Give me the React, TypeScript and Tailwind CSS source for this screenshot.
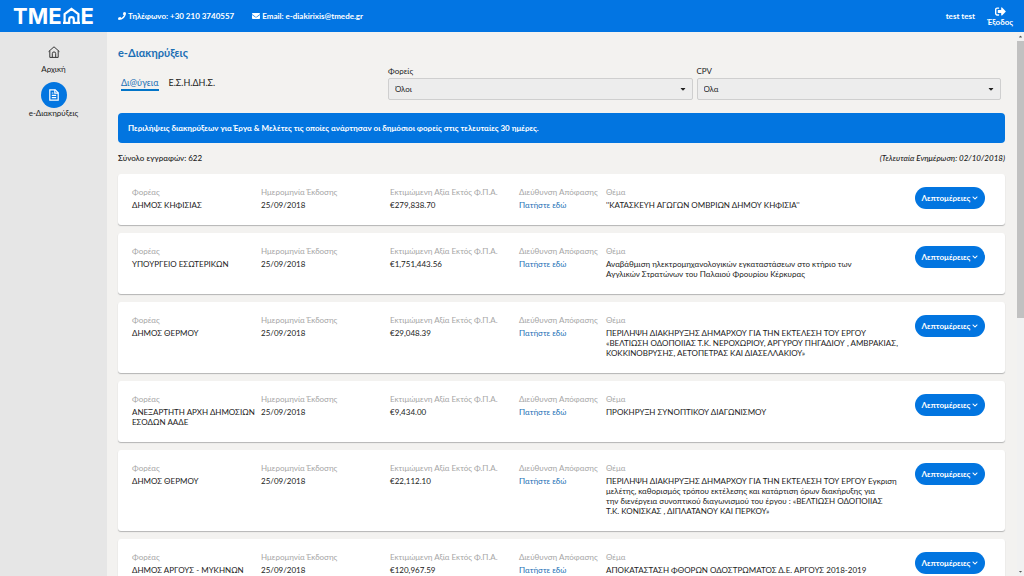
import type { ReactNode } from "react";
import {
  FaCaretDown,
  FaCaretUp,
  FaChevronDown,
  FaEnvelope,
  FaPhone,
  FaSignOutAlt,
} from "react-icons/fa";

type Notice = {
  org: string;
  date: string;
  value: string;
  subject: string;
};

const NOTICES: Notice[] = [
  {
    org: "ΔΗΜΟΣ ΚΗΦΙΣΙΑΣ",
    date: "25/09/2018",
    value: "€279,838.70",
    subject: "''ΚΑΤΑΣΚΕΥΗ ΑΓΩΓΩΝ ΟΜΒΡΙΩΝ ΔΗΜΟΥ ΚΗΦΙΣΙΑ''",
  },
  {
    org: "ΥΠΟΥΡΓΕΙΟ ΕΣΩΤΕΡΙΚΩΝ",
    date: "25/09/2018",
    value: "€1,751,443.56",
    subject:
      "Αναβάθμιση ηλεκτρομηχανολογικών εγκαταστάσεων στο κτήριο των\nΑγγλικών Στρατώνων του Παλαιού Φρουρίου Κέρκυρας",
  },
  {
    org: "ΔΗΜΟΣ ΘΕΡΜΟΥ",
    date: "25/09/2018",
    value: "€29,048.39",
    subject:
      "ΠΕΡΙΛΗΨΗ ΔΙΑΚΗΡΥΞΗΣ ΔΗΜΑΡΧΟΥ ΓΙΑ ΤΗΝ ΕΚΤΕΛΕΣΗ ΤΟΥ ΕΡΓΟΥ\n«ΒΕΛΤΙΩΣΗ ΟΔΟΠΟΙΙΑΣ Τ.Κ. ΝΕΡΟΧΩΡΙΟΥ, ΑΡΓΥΡΟΥ ΠΗΓΑΔΙΟΥ , ΑΜΒΡΑΚΙΑΣ,\nΚΟΚΚΙΝΟΒΡΥΣΗΣ, ΑΕΤΟΠΕΤΡΑΣ ΚΑΙ ΔΙΑΣΕΛΛΑΚΙΟΥ»",
  },
  {
    org: "ΑΝΕΞΑΡΤΗΤΗ ΑΡΧΗ ΔΗΜΟΣΙΩΝ ΕΣΟΔΩΝ ΑΑΔΕ",
    date: "25/09/2018",
    value: "€9,434.00",
    subject: "ΠΡΟΚΗΡΥΞΗ ΣΥΝΟΠΤΙΚΟΥ ΔΙΑΓΩΝΙΣΜΟΥ",
  },
  {
    org: "ΔΗΜΟΣ ΘΕΡΜΟΥ",
    date: "25/09/2018",
    value: "€22,112.10",
    subject:
      "ΠΕΡΙΛΗΨΗ ΔΙΑΚΗΡΥΞΗΣ ΔΗΜΑΡΧΟΥ ΓΙΑ ΤΗΝ ΕΚΤΕΛΕΣΗ ΤΟΥ ΕΡΓΟΥ Έγκριση\nμελέτης, καθορισμός τρόπου εκτέλεσης και κατάρτιση όρων διακήρυξης για\nτην διενέργεια συνοπτικού διαγωνισμού του έργου : «ΒΕΛΤΙΩΣΗ ΟΔΟΠΟΙΙΑΣ\nΤ.Κ. ΚΟΝΙΣΚΑΣ , ΔΙΠΛΑΤΑΝΟΥ ΚΑΙ ΠΕΡΚΟΥ»",
  },
  {
    org: "ΔΗΜΟΣ ΑΡΓΟΥΣ - ΜΥΚΗΝΩΝ",
    date: "25/09/2018",
    value: "€120,967.59",
    subject: "ΑΠΟΚΑΤΑΣΤΑΣΗ ΦΘΟΡΩΝ ΟΔΟΣΤΡΩΜΑΤΟΣ Δ.Ε. ΑΡΓΟΥΣ 2018-2019",
  },
];

function Logo() {
  return (
    <a
      href="#home"
      className="flex items-center font-[Inter,sans-serif] text-[22px] leading-8 font-bold"
    >
      TME
      <svg viewBox="0 0 19 18" className="h-[18px] w-[19px]" fill="none">
        <path
          d="M1 15.9h6.2v-3.4a2.3 2.3 0 0 1 4.6 0v3.4H18M2.6 15.5V7l6.9-5.2L16.4 7v8.5"
          stroke="currentColor"
          strokeWidth="2.2"
        />
      </svg>
      E
    </a>
  );
}

function HomeIcon() {
  return (
    <svg
      viewBox="0 0 12 12"
      className="size-3"
      fill="none"
      stroke="currentColor"
      strokeWidth="0.9"
    >
      <path d="M0.6 5.6 6 0.8l5.4 4.8M1.8 4.8v6.6h8.4V4.8" />
      <path d="M4.3 11.2V7.6a1.7 1.7 0 0 1 3.4 0v3.6" />
    </svg>
  );
}

function NoticeIcon() {
  return (
    <svg
      viewBox="0 0 12 12"
      className="size-3"
      fill="none"
      stroke="currentColor"
      strokeWidth="1.2"
    >
      <path d="M1.8 0.8h5.4l3 3v7.4H1.8z" />
      <path d="M6.8 0.8v3.4h3.4M3.8 4h1.6M3.8 6.3h4.4M3.8 8.7h4.4" />
    </svg>
  );
}

function Filter({ id, label, value }: { id: string; label: string; value: string }) {
  return (
    <div className="flex-1">
      <label htmlFor={id} className="block pb-[2px] text-[8px] leading-[10px]">
        {label}
      </label>
      <div className="relative">
        <select
          id={id}
          className="block h-[22px] w-full appearance-none rounded-[2px] border border-[#cfcfcf] bg-[#ededed] px-[6px] text-[8px]"
        >
          <option>{value}</option>
        </select>
        <FaCaretDown className="pointer-events-none absolute top-[7px] right-[6px] size-2" />
      </div>
    </div>
  );
}

function Field({ label, children }: { label: string; children: ReactNode }) {
  return (
    <div>
      <dt className="pb-[3px] whitespace-nowrap text-[#a6a6a6]">{label}</dt>
      <dd className="pr-1 whitespace-pre-line">{children}</dd>
    </div>
  );
}

function NoticeCard({ notice }: { notice: Notice }) {
  return (
    <li className="rounded-[3px] bg-white px-[14px] pt-[13px] pb-[15px] shadow-[0_1px_1px_#b4b4b4]">
      <div className="flex text-[8px] leading-[10px]">
        <dl className="grid flex-1 grid-cols-[129fr_129fr_129fr_87fr_309fr]">
          <Field label="Φορέας">{notice.org}</Field>
          <Field label="Ημερομηνία Έκδοσης">{notice.date}</Field>
          <Field label="Εκτιμώμενη Αξία Εκτός Φ.Π.Α.">{notice.value}</Field>
          <Field label="Διεύθυνση Απόφασης">
            <a href="#decision" className="text-[#1b6fb5]">
              Πατήστε εδώ
            </a>
          </Field>
          <Field label="Θέμα">{notice.subject}</Field>
        </dl>
        <div className="h-[22px] w-[76px] shrink-0">
          <button
            type="button"
            className="flex h-[22px] w-[70px] items-center justify-center gap-[2px] rounded-full bg-[#0275e0] font-bold whitespace-nowrap text-white"
          >
            Λεπτομέρειες
            <FaChevronDown className="size-[6px]" />
          </button>
        </div>
      </div>
    </li>
  );
}

export default function App() {
  return (
    <div className="flex h-screen flex-col overflow-hidden bg-[#f3f2f0] font-[Lato,'Noto_Sans',sans-serif] text-[#222]">
      <header className="flex h-8 shrink-0 items-center bg-[#0275e3] pr-[11px] pl-[13px] text-[8px] font-bold text-white">
        <Logo />
        <a href="tel:+302103740557" className="ml-6 flex items-center gap-[2px]">
          <FaPhone className="size-2" />
          Τηλέφωνο: +30 210 3740557
        </a>
        <a
          href="mailto:e-diakirixis@tmede.gr"
          className="ml-[18px] flex items-center gap-[2px]"
        >
          <FaEnvelope className="size-2" />
          Email: e-diakirixis@tmede.gr
        </a>
        <span className="ml-auto">test test</span>
        <a href="#logout" className="ml-3 flex flex-col items-center leading-[10px]">
          <FaSignOutAlt className="size-[11px]" />
          Έξοδος
        </a>
      </header>

      <div className="flex min-h-0 flex-1">
        <nav className="flex w-[107px] shrink-0 flex-col items-center bg-[#e6e6e6] pt-[14px] text-[8px] leading-[10px]">
          <a href="#home" className="flex flex-col items-center gap-[6px]">
            <HomeIcon />
            Αρχική
          </a>
          <a href="#notices" className="mt-2 flex flex-col items-center">
            <span className="flex size-[26px] items-center justify-center rounded-full bg-[#0275e0] text-white">
              <NoticeIcon />
            </span>
            e-Διακηρύξεις
          </a>
        </nav>

        <main className="min-w-0 flex-1 overflow-hidden pt-[14px] pr-3 pl-[11px]">
          <h1 className="text-[11px] leading-[14px] font-bold text-[#1b6fb5]">
            e-Διακηρύξεις
          </h1>
          <div className="mt-[6px] flex pr-1">
            <div className="flex w-[270px] shrink-0 items-start gap-[10px] px-[3px] pt-[11px] text-[9px] leading-[12px]">
              <a href="#diavgeia" className="border-b-2 border-[#0275c8] text-[#1b6fb5]">
                Δι@ύγεια
              </a>
              <a href="#esidis">Ε.Σ.Η.ΔΗ.Σ.</a>
            </div>
            <div className="flex flex-1 gap-1">
              <Filter id="orgs" label="Φορείς" value="Όλοι" />
              <Filter id="cpv" label="CPV" value="Όλα" />
            </div>
          </div>

          <p className="mt-[13px] rounded-[4px] bg-[#0275e0] p-[10px] text-[8px] leading-[10px] font-bold text-white">
            Περιλήψεις διακηρύξεων για Έργα & Μελέτες τις οποίες ανάρτησαν οι
            δημόσιοι φορείς στις τελευταίες 30 ημέρες.
          </p>

          <div className="mt-[10px] flex justify-between text-[8px] leading-[10px] font-medium">
            <span>Σύνολο εγγραφών: 622</span>
            <em>(Τελευταία Ενημέρωση: 02/10/2018)</em>
          </div>

          <ul className="mt-[11px] flex flex-col gap-2">
            {NOTICES.map((notice, i) => (
              <NoticeCard key={i} notice={notice} />
            ))}
          </ul>
        </main>

        <div className="flex w-[7px] shrink-0 flex-col items-center bg-[#f1f1f1] text-[#555]">
          <FaCaretUp className="my-[2px] size-[5px] shrink-0" />
          <div className="h-[51%] w-full bg-[#c1c1c1]" />
          <FaCaretDown className="mt-auto mb-[2px] size-[5px] shrink-0" />
        </div>
      </div>
    </div>
  );
}
